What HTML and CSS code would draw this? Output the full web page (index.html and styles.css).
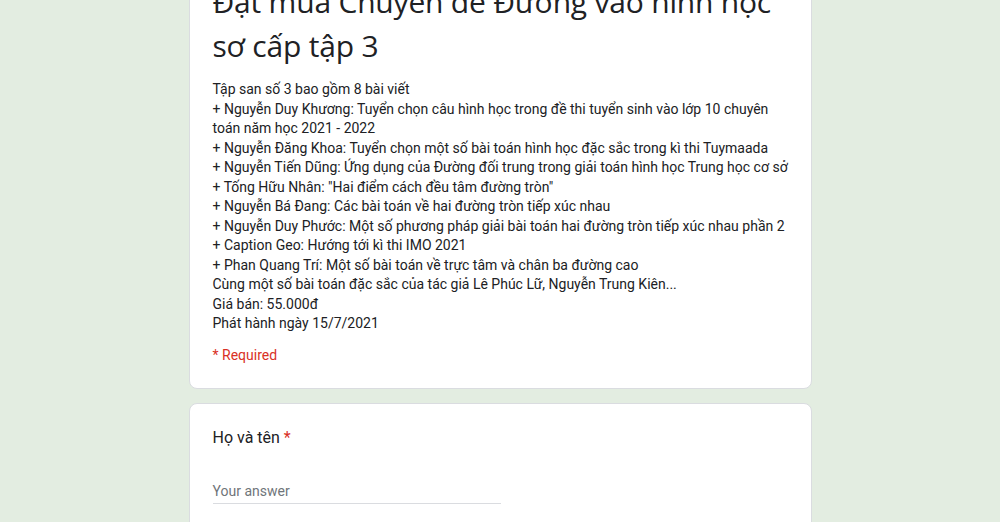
FILE: index.html
```html
<!DOCTYPE html>
<html lang="vi">
<head>
<meta charset="utf-8">
<title>Đặt mua Chuyên đề Đường vào hình học sơ cấp tập 3</title>
<link rel="stylesheet" href="styles.css">
</head>
<body>
<main class="form">
  <section class="card header-card">
    <h1 class="title">Đặt mua Chuyên đề Đường vào hình học sơ cấp tập 3</h1>
    <div class="desc">Tập san số 3 bao gồm 8 bài viết<br>+ Nguyễn Duy Khương: Tuyển chọn câu hình học trong đề thi tuyển sinh vào lớp 10 chuyên toán năm học 2021 - 2022<br>+ Nguyễn Đăng Khoa: Tuyển chọn một số bài toán hình học đặc sắc trong kì thi Tuymaada<br>+ Nguyễn Tiến Dũng: Ứng dụng của Đường đối trung trong giải toán hình học Trung học cơ sở<br>+ Tống Hữu Nhân: "Hai điểm cách đều tâm đường tròn"<br>+ Nguyễn Bá Đang: Các bài toán về hai đường tròn tiếp xúc nhau<br>+ Nguyễn Duy Phước: Một số phương pháp giải bài toán hai đường tròn tiếp xúc nhau phần 2<br>+ Caption Geo: Hướng tới kì thi IMO 2021<br>+ Phan Quang Trí: Một số bài toán về trực tâm và chân ba đường cao<br>Cùng một số bài toán đặc sắc của tác giả Lê Phúc Lữ, Nguyễn Trung Kiên...<br>Giá bán: 55.000đ<br>Phát hành ngày 15/7/2021</div>
    <div class="required-legend">* Required</div>
  </section>
  <section class="card question">
    <div class="q-title">Họ và tên <span class="star">*</span></div>
    <div class="answer"><span class="placeholder">Your answer</span></div>
  </section>
</main>
</body>
</html>
```

FILE: styles.css
```css
html, body {
  margin: 0;
  padding: 0;
}
body {
  background: #e3ede1;
  font-family: Roboto, "Liberation Sans", sans-serif;
  color: #202124;
  overflow: hidden;
}
.form {
  width: 623px;
  margin: -44px auto 0;
  display: flex;
  flex-direction: column;
  gap: 14px;
}
.card {
  background: #fff;
  border: 1px solid #dadce0;
  border-radius: 8px;
  padding: 23px 19px 23px 23px;
}
.title {
  margin: 0;
  font-family: "Open Sans", Roboto, sans-serif;
  font-weight: 400;
  font-size: 30px;
  line-height: 44px;
  color: #202124;
  letter-spacing: -0.2px;
}
.desc {
  margin-top: 12px;
  font-size: 14px;
  line-height: 19.5px;
  color: #202124;
}
.required-legend {
  margin-top: 11px;
  font-size: 14px;
  line-height: 20px;
  color: #d93025;
}
.question {
  padding-top: 22px;
  padding-bottom: 40px;
}
.q-title {
  font-size: 16px;
  line-height: 24px;
  color: #202124;
}
.star {
  color: #d93025;
}
.answer {
  margin-top: 31px;
  width: 288px;
  border-bottom: 1px solid #dadce0;
  padding-bottom: 2px;
  font-size: 14px;
  line-height: 20px;
}
.placeholder {
  color: #70757a;
}
```
